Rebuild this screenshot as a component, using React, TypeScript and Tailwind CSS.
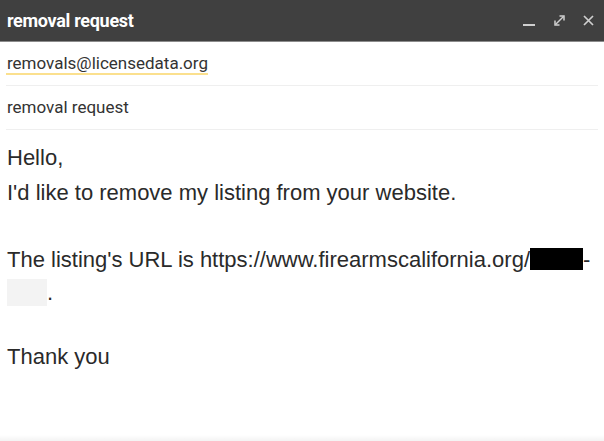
import React from "react";

export default function App() {
  return (
    <div className="w-[604px] h-[441px] bg-white overflow-hidden relative flex flex-col">
      <div className="h-[42px] bg-[#404040] border-b border-[#8c8c8c] flex items-center justify-between pl-[7px] pr-[10px] shrink-0">
        <span className="text-white font-bold text-[18px] tracking-[-0.3px]" style={{ fontFamily: "Roboto, sans-serif" }}>
          removal request
        </span>
        <div className="flex items-center gap-[17px]">
          <svg width="13" height="14" viewBox="0 0 13 14">
            <rect x="0" y="10" width="12" height="2" fill="#cfcfcf" />
          </svg>
          <svg width="13" height="13" viewBox="0 0 13 13" fill="none" stroke="#cfcfcf" strokeWidth="1.5">
            <path d="M2.5 10.5 L10.5 2.5" />
            <path d="M6.5 2 H11 V6.5" />
            <path d="M2 6.5 V11 H6.5" />
          </svg>
          <svg width="11" height="11" viewBox="0 0 11 11" fill="none" stroke="#cfcfcf" strokeWidth="1.7">
            <path d="M1 1 L10 10 M10 1 L1 10" />
          </svg>
        </div>
      </div>
      <div className="mx-[6px] h-[44px] border-b border-[#efefef] flex items-center shrink-0" style={{ fontFamily: "Roboto, sans-serif" }}>
        <span className="text-[17px] text-[#333] pl-[1px] border-b-2 border-[#fbe08e] leading-[20px]">
          removals@licensedata.org
        </span>
      </div>
      <div className="mx-[6px] h-[44px] border-b border-[#efefef] flex items-center shrink-0" style={{ fontFamily: "Roboto, sans-serif" }}>
        <span className="text-[17px] text-[#333] pl-[1px]">removal request</span>
      </div>
      <div
        className="px-[7px] pt-[11px] text-[22px] leading-[33px] text-[#2a2a2a] flex-1"
        style={{ fontFamily: '"Liberation Sans", Arial, sans-serif' }}
      >
        <div>Hello,</div>
        <div className="mt-[2px]">I'd like to remove my listing from your website.</div>
        <div className="h-[34px]" />
        <div>
          The listing's URL is https://www.firearmscalifornia.org/
          <span className="inline-block w-[53px] h-[22px] bg-black align-[-3px]" />
          -
          <br />
          <span className="inline-block w-[40px] h-[27px] bg-[#f3f3f3] align-[-6px]" />.
        </div>
        <div className="h-[31px]" />
        <div>Thank you</div>
      </div>
      <div className="h-[6px] bg-gradient-to-b from-white to-[#f3f3f3] shrink-0" />
    </div>
  );
}
